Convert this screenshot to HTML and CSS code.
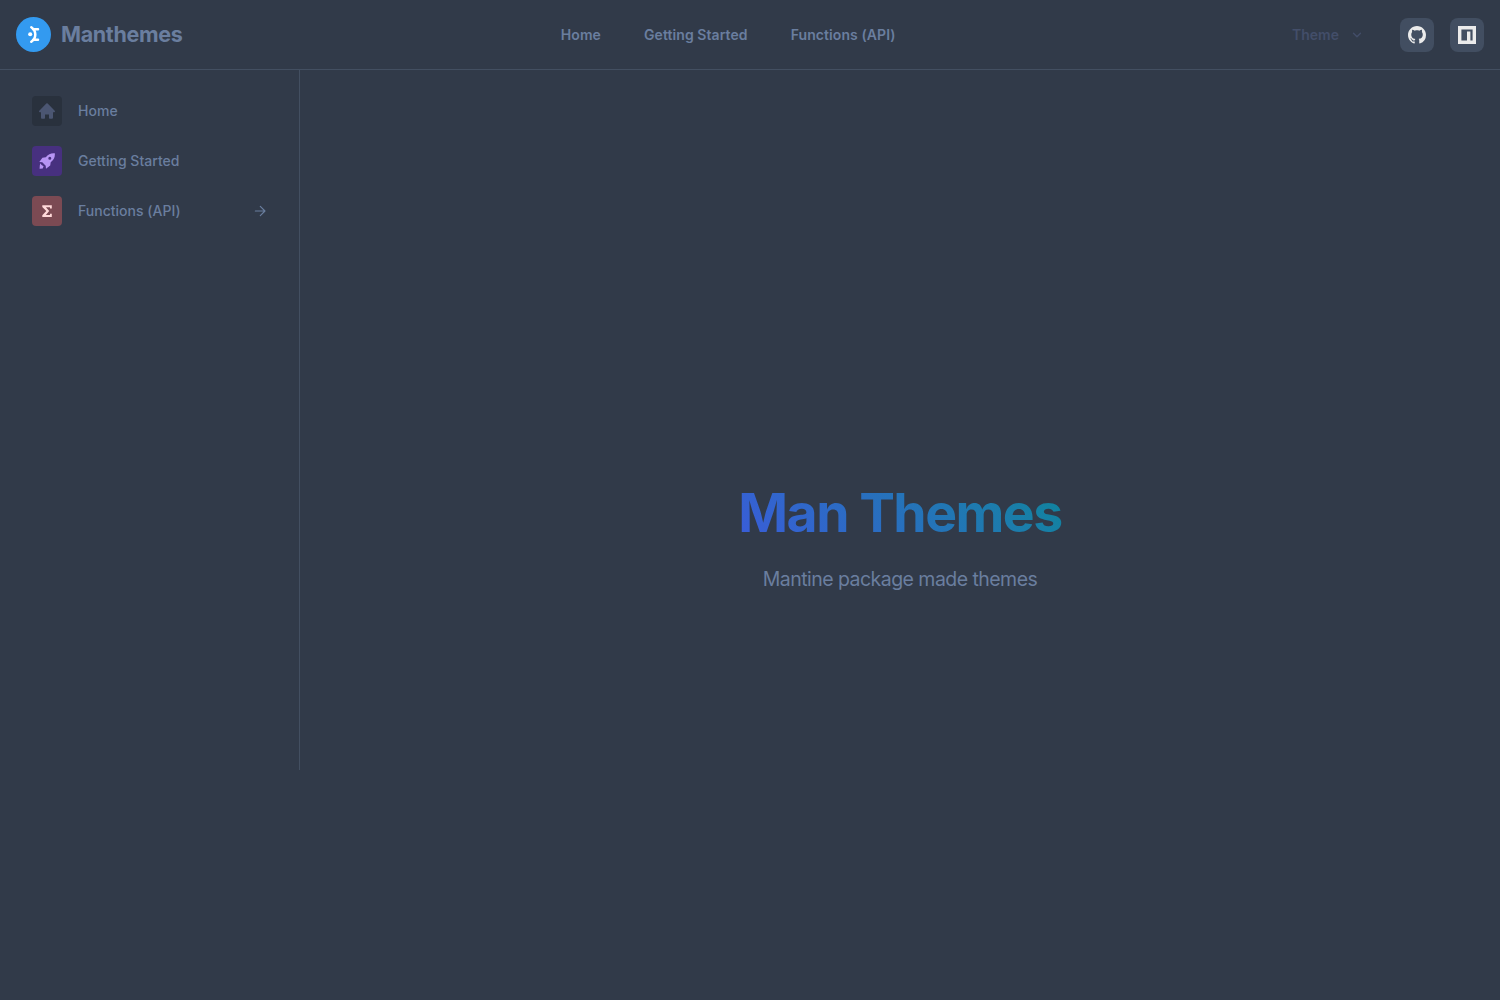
FILE: index.html
```html
<!DOCTYPE html>
<html lang="en">
<head>
<meta charset="utf-8">
<title>Manthemes</title>
<link rel="stylesheet" href="styles.css">
</head>
<body>
<header class="header">
  <a class="brand">
    <svg class="logo" viewBox="0 0 35 35" width="35" height="35"><circle cx="17.5" cy="17.500" r="17.500" fill="#339af0"/><circle cx="14.200" cy="17.300" r="2.050" fill="#fff"/><path d="M15.300 10.200Q19.300 13 19.300 17.500T15.300 24.800M17 12.300H22M17 22.700H22" fill="none" stroke="#fff" stroke-width="2.500" stroke-linecap="round"/></svg>
    <span class="brand-name">Manthemes</span>
  </a>
  <nav class="nav">
    <a class="nav-link">Home</a>
    <a class="nav-link">Getting Started</a>
    <a class="nav-link">Functions (API)</a>
  </nav>
  <div class="actions">
    <button class="theme">Theme
      <svg width="14" height="14" viewBox="0 0 24 24" fill="none" stroke="currentColor" stroke-width="2.300" stroke-linecap="round" stroke-linejoin="round"><path d="M6 9l6 6 6-6"/></svg>
    </button>
    <a class="action"><svg width="18" height="18" viewBox="0 0 16 16" fill="currentColor"><path d="M8 0C3.580 0 0 3.580 0 8c0 3.540 2.290 6.530 5.470 7.590.4.070.55-.17.55-.38 0-.19-.01-.82-.01-1.490-2.010.37-2.530-.49-2.690-.94-.09-.23-.48-.94-.82-1.130-.28-.15-.68-.52-.01-.53.63-.01 1.080.58 1.230.82.72 1.210 1.870.87 2.330.66.07-.52.28-.87.51-1.070-1.780-.2-3.640-.89-3.640-3.950 0-.87.31-1.590.82-2.150-.08-.2-.36-1.020.08-2.120 0 0 .67-.21 2.200.82.64-.18 1.320-.27 2-.27s1.360.09 2 .27c1.530-1.040 2.200-.82 2.200-.82.44 1.100.16 1.920.08 2.120.51.56.82 1.270.82 2.150 0 3.070-1.870 3.750-3.650 3.950.29.25.54.73.54 1.480 0 1.070-.01 1.930-.01 2.200 0 .21.15.46.55.38A8.010 8.010 0 0 0 16 8c0-4.420-3.580-8-8-8z"/></svg></a>
    <a class="action"><svg width="18" height="18" viewBox="0 0 18 18"><path fill="currentColor" fill-rule="evenodd" d="M0 0h18v18H0zM3.400 3.400v11.200h5.600V5.600h3.400v9h2.200V3.400z"/></svg></a>
  </div>
</header>
<div class="body">
  <aside class="sidebar">
    <a class="side-link"><span class="side-icon side-icon-home"><svg width="16" height="16" viewBox="0 0 16 16" fill="currentColor"><path d="M7.300.6a1 1 0 0 1 1.400 0l7 7.200c.6.6.200 1.400-.5 1.400H14v5.600a1 1 0 0 1-1 1h-2.200a.8.8 0 0 1-.8-.8v-3.500H6V15a.8.8 0 0 1-.8.8H3a1 1 0 0 1-1-1V9.200H.8C.1 9.200-.3 8.400.3 7.800z"/></svg></span><span class="side-text">Home</span></a>
    <a class="side-link"><span class="side-icon side-icon-start"><svg width="16" height="16" viewBox="0 0 16 16" fill="currentColor"><path fill-rule="evenodd" d="M15.800.2C12.400-.2 9.200 1 6.800 4.300L3.400 4.800.3 9l3 .3 3.400 3.400.3 3 4.200-3.100.5-3.400C15 6.800 16.200 3.600 15.800.2zM10.800 3.700a1.500 1.500 0 1 1 0 3 1.500 1.500 0 0 1 0-3z"/><path d="M1.400 10.200l1.200 1.900 2 1.200-.9 2.100-3.100.4.200-3.300z"/></svg></span><span class="side-text">Getting Started</span></a>
    <a class="side-link"><span class="side-icon side-icon-api"><svg width="12" height="14" viewBox="0 0 12 14" fill="currentColor"><path d="M1.300 1.200H10.800V4.400H9V3.300H4.900L8.200 7.100 4.900 10.900H9V9.800H10.800V13H1.300V11.300L5.300 7.100 1.300 2.900z"/></svg></span><span class="side-text">Functions (API)</span>
      <svg class="arrow" width="14" height="14" viewBox="0 0 24 24" fill="none" stroke="currentColor" stroke-width="2" stroke-linecap="round" stroke-linejoin="round"><path d="M4 12h16M12.500 4l8 8-8 8"/></svg></a>
  </aside>
  <main class="hero">
    <h1 class="title">Man Themes</h1>
    <p class="subtitle">Mantine package made themes</p>
  </main>
</div>
</body>
</html>
```
FILE: styles.css
```css
* { box-sizing: border-box; }
body {
  margin: 0;
  min-height: 100vh;
  background: #313a49;
  color: #6a7e9f;
  font-family: Inter, "Liberation Sans", sans-serif;
  font-size: 14px;
}
.header {
  display: flex;
  align-items: center;
  justify-content: space-between;
  height: 70px;
  padding: 0 16px;
  border-bottom: 1px solid #434f61;
}
.brand { display: flex; align-items: center; gap: 10px; }
.logo { display: block; margin-bottom: 1px; }
.brand-name {
  padding-bottom: 1px;
  font-size: 21.5px;
  line-height: 34px;
  font-weight: 700;
  letter-spacing: -0.35px;
}
.nav { display: flex; gap: 7px; }
.nav-link { padding: 0 18px; font-weight: 600; line-height: 36px; letter-spacing: 0.08px; }
.actions { display: flex; align-items: center; gap: 16px; }
.theme {
  display: flex;
  align-items: center;
  gap: 11px;
  height: 36px;
  padding: 0 20px 0 18px;
  border: 0;
  background: none;
  color: #434e69;
  font: inherit;
  font-weight: 600;
}
.action {
  display: grid;
  place-items: center;
  width: 34px;
  height: 34px;
  border-radius: 8px;
  background: #424e61;
  color: #ebebeb;
}
.body { display: flex; }
.sidebar {
  width: 300px;
  height: 700px;
  padding: 16px;
  border-right: 1px solid #434f61;
}
.side-link {
  display: flex;
  align-items: center;
  height: 50px;
  padding: 0 16px;
  font-weight: 500;
  letter-spacing: 0.02px;
}
.side-text { padding-bottom: 2px; }
.side-icon {
  display: grid;
  place-items: center;
  width: 30px;
  height: 30px;
  margin-right: 16px;
  border-radius: 4px;
}
.side-icon-home { background: #29313d; color: #4b5672; }
.side-icon-start { background: #47307f; color: #b794f4; }
.side-icon-api { background: #7b4a53; color: #ffd9d9; }
.arrow { margin-left: auto; }
.hero {
  flex: 1;
  height: 930px;
  display: flex;
  flex-direction: column;
  align-items: center;
  padding-top: 406px;
}
.title {
  margin: 0;
  font-size: 53.5px;
  line-height: 74px;
  font-weight: 700;
  letter-spacing: -1.5px;
  color: transparent;
  background: linear-gradient(45deg, #3b5bdb 0%, #1c7cac 75%, #0c8599 100%);
  background-clip: text;
  -webkit-background-clip: text;
}
.subtitle { margin: 14px 0 0; font-size: 19.5px; line-height: 31px; letter-spacing: -0.54px; }
```
